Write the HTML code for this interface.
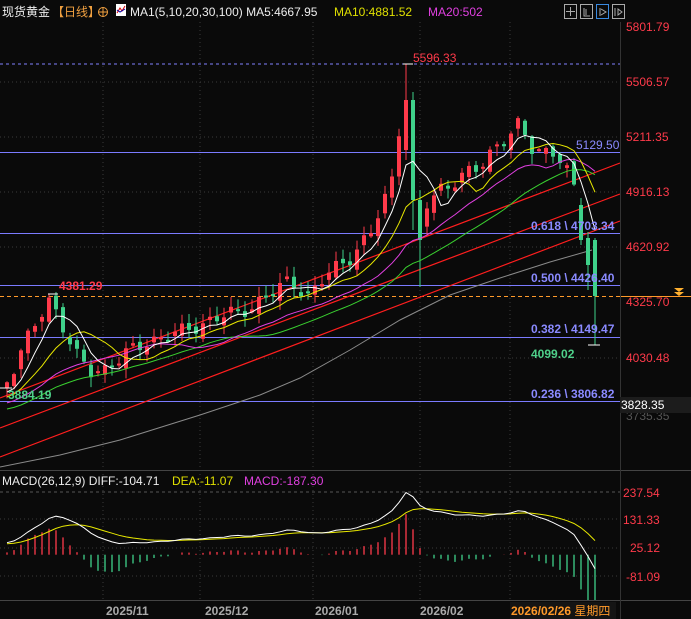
<!DOCTYPE html>
<html><head><meta charset="utf-8"><style>
body{margin:0;background:#0a0a0a;width:691px;height:619px;overflow:hidden;font-family:"Liberation Sans","Noto Sans CJK SC",sans-serif}
svg{display:block}
</style></head><body>
<svg id="s" width="691" height="619" xmlns="http://www.w3.org/2000/svg" font-family="Liberation Sans, Noto Sans CJK SC, sans-serif">
<rect width="691" height="619" fill="#0a0a0a"/>
<g id="grid" stroke="#3a3a3a" stroke-dasharray="1,3">
<line x1="0" y1="82" x2="620" y2="82"/><line x1="0" y1="137" x2="620" y2="137"/><line x1="0" y1="192" x2="620" y2="192"/><line x1="0" y1="247" x2="620" y2="247"/><line x1="0" y1="358" x2="620" y2="358"/>
<line x1="0" y1="519" x2="620" y2="519"/><line x1="0" y1="548" x2="620" y2="548"/><line x1="0" y1="576" x2="620" y2="576"/>
<line x1="103" y1="22" x2="103" y2="600"/><line x1="200" y1="22" x2="200" y2="600"/><line x1="313" y1="22" x2="313" y2="600"/><line x1="420" y1="22" x2="420" y2="600"/><line x1="510" y1="22" x2="510" y2="600"/>
</g>
<line x1="0" y1="492" x2="620" y2="492" stroke="#555" stroke-dasharray="3,3"/>
<g stroke="#7b7bff" stroke-width="1">
<line x1="0" y1="152.5" x2="620" y2="152.5"/><line x1="0" y1="233.5" x2="620" y2="233.5"/><line x1="0" y1="285.5" x2="620" y2="285.5"/><line x1="0" y1="337.5" x2="620" y2="337.5"/><line x1="0" y1="401.5" x2="620" y2="401.5"/>
</g>
<line x1="0" y1="64" x2="620" y2="64" stroke="#8080ff" stroke-dasharray="3,3"/>
<line x1="0" y1="296.5" x2="620" y2="296.5" stroke="#ff9a2a" stroke-dasharray="4,3"/>
<line x1="620" y1="296.5" x2="691" y2="296.5" stroke="#ff9a2a"/>
<path d="M674 288h10l-5 4zM674 292h10l-5 4z" fill="#ffb030"/>
<polyline points="0,467 60,455 120,440 200,415 260,395 300,378 350,350 400,320 450,295 500,278 550,262 585,252 592,250" fill="none" stroke="#8a8a8a"/>
<g stroke="#ff1e1e" stroke-width="1.2">
<line x1="0" y1="398" x2="620" y2="163"/><line x1="0" y1="428" x2="620" y2="194"/><line x1="0" y1="457" x2="620" y2="221"/>
</g>
<g id="cd"></g>
<g id="ma" fill="none"></g>
<g id="mc"></g>
<line x1="0" y1="470.5" x2="691" y2="470.5" stroke="#444"/>
<line x1="0" y1="600.5" x2="691" y2="600.5" stroke="#444"/>
<line x1="620.5" y1="22" x2="620.5" y2="619" stroke="#333"/>
<g font-size="12" fill="#ff3a4a">
<text x="626" y="31">5801.79</text><text x="626" y="86">5506.57</text><text x="626" y="141">5211.35</text><text x="626" y="196">4916.13</text><text x="626" y="251">4620.92</text><text x="626" y="306">4325.70</text><text x="626" y="362">4030.48</text>
<text x="626" y="420" fill="#555">3735.35</text>
<text x="623" y="497">237.54</text><text x="623" y="524">131.33</text><text x="630" y="552">25.12</text><text x="626" y="581">-81.09</text>
</g>
<rect x="620" y="397" width="71" height="16" fill="#1c1c1c"/>
<text x="621" y="409" font-size="12" fill="#fff">3828.35</text>
<g font-size="12" font-weight="bold">
<text x="413" y="62" fill="#ff3a4a" font-weight="normal">5596.33</text>
<text x="576" y="149" fill="#8a8aff" font-weight="normal">5129.50</text>
<text x="531" y="230" fill="#8a8aff">0.618 \ 4703.34</text>
<text x="531" y="282" fill="#8a8aff">0.500 \ 4426.40</text>
<text x="531" y="333" fill="#8a8aff">0.382 \ 4149.47</text>
<text x="531" y="358" fill="#4fd08a">4099.02</text>
<text x="531" y="398" fill="#8a8aff">0.236 \ 3806.82</text>
<text x="59" y="290" fill="#ff3a4a">4381.29</text>
<text x="8" y="399" fill="#4fd08a">3884.19</text>
</g>
<g font-size="12">
<text x="2" y="16" fill="#eee">现货黄金</text><text x="52" y="16" fill="#f0a040">【日线】</text>
<circle cx="103" cy="12" r="4.5" fill="none" stroke="#f0a040"/><line x1="98" y1="12" x2="108" y2="12" stroke="#f0a040"/><line x1="103" y1="7" x2="103" y2="17" stroke="#f0a040"/>
<rect x="116" y="4" width="10" height="12" fill="#fff"/><polyline points="117,13 120,8 122,11 125,6" fill="none" stroke="#d00"/><polyline points="117,10 120,12 125,9" fill="none" stroke="#00a"/>
<text x="130" y="16" fill="#eee">MA1(5,10,20,30,100)  MA5:4667.95</text>
<text x="334" y="16" fill="#e0e000">MA10:4881.52</text>
<text x="428" y="16" fill="#e040e0">MA20:502</text>
<text x="2" y="485" fill="#eee">MACD(26,12,9) DIFF:-104.71</text>
<text x="172" y="485" fill="#e0e000">DEA:-11.07</text>
<text x="244" y="485" fill="#e040e0">MACD:-187.30</text>
</g>
<g fill="none" stroke="#aaa">
<rect x="564.5" y="4.5" width="12" height="14"/><rect x="580.5" y="4.5" width="12" height="14"/><rect x="596.5" y="4.5" width="12" height="14" stroke="#3a8ae0"/><rect x="612.5" y="4.5" width="12" height="14"/>
<path d="M570.5 7v9M566 11.5h9M584 8v8h6M586 9v6" /><path d="M600 8v8M601 9l5 3l-5 3M615 8v8M618 9v6l4-3z"/>
</g>
<g font-size="12" font-weight="bold" fill="#aaa">
<text x="106" y="615">2025/11</text><text x="205" y="615">2025/12</text><text x="315" y="615">2026/01</text><text x="420" y="615">2026/02</text>
</g>
<rect x="510" y="602" width="106" height="17" fill="#141414"/>
<text x="511" y="615" font-size="12" font-weight="bold" fill="#ff9a2a">2026/02/26 <tspan font-weight="normal">星期四</tspan></text>
</svg>
<script>
(function(){
var kp=[[0,388],[8,378],[30,335],[50,298],[60,318],[75,355],[90,372],[105,368],[130,352],[150,340],[180,333],[210,320],[240,312],[270,295],[290,280],[310,296],[330,272],[350,256],[370,236],[385,198],[395,170],[400,118],[406,96],[413,150],[420,232],[427,205],[440,188],[460,178],[480,168],[495,145],[510,135],[520,125],[530,148],[545,150],[555,152],[565,168],[574,190],[581,232],[588,262],[595,296]];
function yAt(x){for(var k=1;k<kp.length;k++){if(x<=kp[k][0]){var a=kp[k-1],b=kp[k];return a[1]+(b[1]-a[1])*(x-a[0])/(b[0]-a[0]);}}return kp[kp.length-1][1];}
var N=85,C=[],O=[],H=[],L=[],X=[];
for(var i=0;i<N;i++){var x=7+7*i;X.push(x);C.push(yAt(x)+Math.sin(i*1.7)*6+Math.cos(i*0.9)*3);}
for(i=0;i<N;i++){O[i]=(i?C[i-1]:C[0]+6)+Math.sin(i*2.3)*5;H[i]=Math.min(O[i],C[i])-Math.abs(Math.sin(i*3.1))*9-1;L[i]=Math.max(O[i],C[i])+Math.abs(Math.cos(i*1.3))*9+1;}
var j=57;O[j]=150;C[j]=100;H[j]=64;L[j]=160;
j=58;O[j]=100;C[j]=200;H[j]=92;L[j]=230;
j=59;O[j]=200;C[j]=240;H[j]=190;L[j]=287;
j=82;O[j]=205;C[j]=240;H[j]=198;L[j]=245;
j=83;O[j]=238;C[j]=265;H[j]=232;L[j]=290;
j=84;O[j]=240;C[j]=296;H[j]=238;L[j]=345;
var s="";
for(i=0;i<N;i++){var up=C[i]<O[i];var col=up?"#ff3a4a":"#3fd18a";var t=Math.min(O[i],C[i]),h=Math.max(2,Math.abs(O[i]-C[i]));
s+='<line x1="'+X[i]+'" y1="'+H[i]+'" x2="'+X[i]+'" y2="'+L[i]+'" stroke="'+col+'"/>';
s+='<rect x="'+(X[i]-2)+'" y="'+t+'" width="4" height="'+h+'" fill="'+col+'"/>';}
s+='<line x1="403" y1="64" x2="413" y2="64" stroke="#fff"/><line x1="588" y1="345" x2="600" y2="345" stroke="#fff"/><line x1="0" y1="388" x2="12" y2="388" stroke="#fff"/><line x1="48" y1="294" x2="58" y2="294" stroke="#fff"/>';
document.getElementById("cd").innerHTML=s;
var pre=[];for(i=0;i<40;i++)pre.push(440-i*1.2+Math.sin(i)*4);
var all=pre.concat(C);
function ma(n){var r=[];for(var i=0;i<N;i++){var k=i+40,sum=0;for(var q=0;q<n;q++)sum+=all[k-q];r.push(sum/n);}return r;}
function pl(arr,col){var p=[];for(var i=0;i<N;i++)p.push(X[i]+","+arr[i].toFixed(1));return '<polyline points="'+p.join(" ")+'" stroke="'+col+'"/>';}
var m="";m+=pl(ma(30),"#3ad030");m+=pl(ma(20),"#e040e0");m+=pl(ma(10),"#e8e800");m+=pl(ma(5),"#ffffff");
document.getElementById("ma").innerHTML=m;
function P(y){return 5801.79-(y-27)/0.18743;}
var pr=all.map(P);var e12=pr[0],e26=pr[0],dea=0,D=[],E=[];
for(i=0;i<pr.length;i++){e12=e12+(pr[i]-e12)*2/13;e26=e26+(pr[i]-e26)*2/27;var d=e12-e26;dea=dea+(d-dea)*2/10;D.push(d);E.push(dea);}
var sc=0.2683,z=554.7,mm="",pd=[],pe=[];
for(i=0;i<N;i++){var d=D[i+40],e=E[i+40],hh=(d-e)*2;var yy=z-hh*sc;
mm+='<line x1="'+X[i]+'" y1="'+z+'" x2="'+X[i]+'" y2="'+Math.max(470,Math.min(600,yy)).toFixed(1)+'" stroke="'+(hh>0?"#ff3a4a":"#3fd18a")+'" stroke-width="1.3"/>';
pd.push(X[i]+","+(z-d*sc).toFixed(1));pe.push(X[i]+","+(z-e*sc).toFixed(1));}
mm+='<polyline points="'+pe.join(" ")+'" fill="none" stroke="#e8e800"/><polyline points="'+pd.join(" ")+'" fill="none" stroke="#fff"/>';
document.getElementById("mc").innerHTML=mm;
})();
</script>
</body></html>
